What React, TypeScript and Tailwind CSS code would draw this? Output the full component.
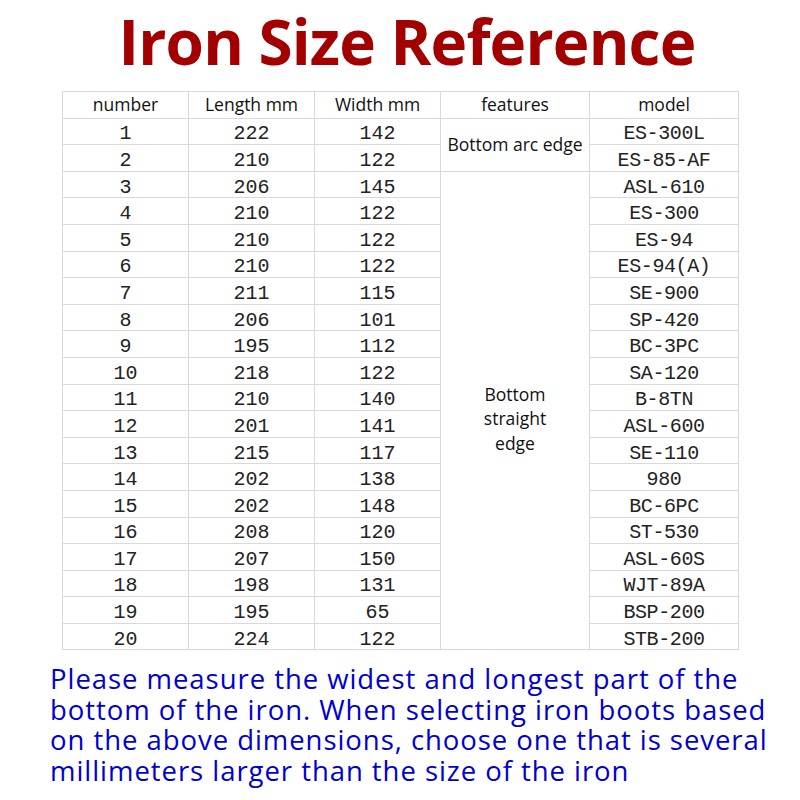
const rows = [
  ["1", "222", "142", "ES-300L"],
  ["2", "210", "122", "ES-85-AF"],
  ["3", "206", "145", "ASL-610"],
  ["4", "210", "122", "ES-300"],
  ["5", "210", "122", "ES-94"],
  ["6", "210", "122", "ES-94(A)"],
  ["7", "211", "115", "SE-900"],
  ["8", "206", "101", "SP-420"],
  ["9", "195", "112", "BC-3PC"],
  ["10", "218", "122", "SA-120"],
  ["11", "210", "140", "B-8TN"],
  ["12", "201", "141", "ASL-600"],
  ["13", "215", "117", "SE-110"],
  ["14", "202", "138", "980"],
  ["15", "202", "148", "BC-6PC"],
  ["16", "208", "120", "ST-530"],
  ["17", "207", "150", "ASL-60S"],
  ["18", "198", "131", "WJT-89A"],
  ["19", "195", "65", "BSP-200"],
  ["20", "224", "122", "STB-200"],
];

const cell = "border border-[#d9d9d9] text-center p-0";
const mono = "font-['Liberation_Mono',monospace] text-[20px] leading-[18px] text-[#222] pt-[6px]";
const sans = "text-[17.5px] text-[#111] font-normal";

export default function App() {
  return (
    <div className="w-[800px] h-[800px] bg-white overflow-hidden font-['Open_Sans',sans-serif]">
      <h1 className="text-center font-bold text-[#a30000] text-[62px] leading-none pt-[10px] pl-[14px] tracking-[-0.8px]">
        Iron Size Reference
      </h1>
      <div className="pl-[62px] pt-[19px]">
        <table className="border-collapse table-fixed w-[676px]">
          <colgroup>
            <col className="w-[126px]" />
            <col className="w-[126px]" />
            <col className="w-[126px]" />
            <col className="w-[149px]" />
            <col className="w-[149px]" />
          </colgroup>
          <thead>
            <tr className="h-[26.6px]">
              <th className={`${cell} ${sans} leading-none`}>number</th>
              <th className={`${cell} ${sans} leading-none`}>Length mm</th>
              <th className={`${cell} ${sans} leading-none`}>Width mm</th>
              <th className={`${cell} ${sans} leading-none`}>features</th>
              <th className={`${cell} ${sans} leading-none`}>model</th>
            </tr>
          </thead>
          <tbody>
            {rows.map((r, i) => (
              <tr key={r[0]} className="h-[26.6px]">
                <td className={`${cell} ${mono}`}>{r[0]}</td>
                <td className={`${cell} ${mono}`}>{r[1]}</td>
                <td className={`${cell} ${mono}`}>{r[2]}</td>
                {i === 0 && (
                  <td rowSpan={2} className={`${cell} ${sans} leading-none`}>
                    Bottom arc edge
                  </td>
                )}
                {i === 2 && (
                  <td rowSpan={18} className={`${cell} ${sans} leading-[24.5px] pt-[16px]`}>
                    Bottom
                    <br />
                    straight
                    <br />
                    edge
                  </td>
                )}
                <td className={`${cell} ${mono} tracking-[-0.4px]`}>{r[3]}</td>
              </tr>
            ))}
          </tbody>
        </table>
      </div>
      <p className="pl-[50px] pt-[14px] text-[#0000d0] text-[27.5px] leading-[30.5px] tracking-[0.95px] whitespace-nowrap">
        Please measure the widest and longest part of the
        <br />
        bottom of the iron. When selecting iron boots based
        <br />
        on the above dimensions, choose one that is several
        <br />
        millimeters larger than the size of the iron
      </p>
    </div>
  );
}
